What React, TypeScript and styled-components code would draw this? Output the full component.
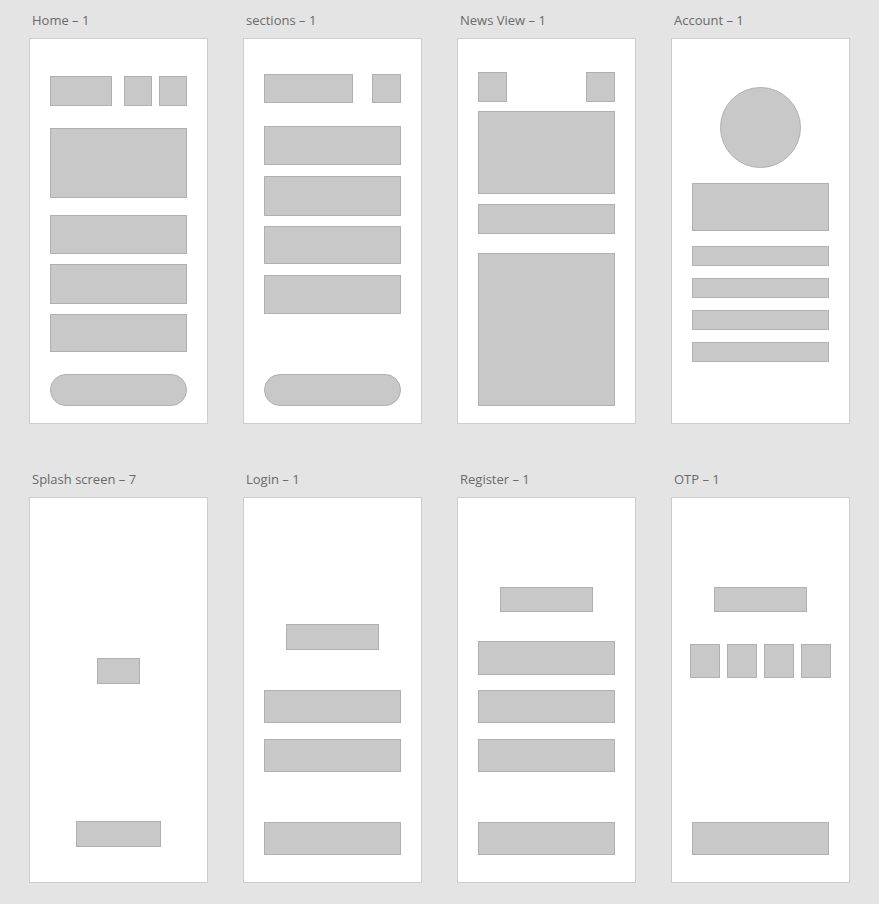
import React from "react";
import styled, { createGlobalStyle } from "styled-components";

const GlobalStyle = createGlobalStyle`
  *, *::before, *::after { box-sizing: border-box; }
  body {
    margin: 0;
    background: #e4e4e4;
    font-family: "Open Sans", "Noto Sans", sans-serif;
  }
`;

const Canvas = styled.main`
  display: grid;
  grid-template-columns: repeat(4, minmax(0, 1fr));
  gap: 45px 35px;
  padding: 10px 29px 21px;
`;

const Artboard = styled.section`
  display: flex;
  flex-direction: column;
`;

const Title = styled.h2`
  margin: 0 0 8px;
  padding-left: 3px;
  font-size: 13px;
  line-height: 20px;
  font-weight: 400;
  color: #6a6a6a;
  white-space: nowrap;
`;

const Screen = styled.div`
  display: flex;
  flex-direction: column;
  flex: 1;
  min-height: 386px;
  padding: 0 20px;
  background: #fff;
  border: 1px solid #cdcdcd;
`;

const Block = styled.div<{ $height: number; $top?: number }>`
  height: ${(p) => p.$height}px;
  margin-top: ${(p) => p.$top ?? 0}px;
  background: #c8c8c8;
  border: 1px solid #b0b0b0;
`;

const Pill = styled(Block)`
  border-radius: 16px;
`;

const CenteredBlock = styled(Block)<{ $width: number }>`
  width: ${(p) => p.$width}px;
  align-self: center;
`;

const Avatar = styled(CenteredBlock)`
  border-radius: 50%;
`;

const Toolbar = styled.div<{ $top: number; $columns: string; $gap?: number }>`
  display: grid;
  grid-template-columns: ${(p) => p.$columns};
  justify-content: space-between;
  column-gap: ${(p) => p.$gap ?? 0}px;
  margin-top: ${(p) => p.$top}px;
`;

const IconPair = styled.div`
  display: grid;
  grid-template-columns: 28px 28px;
  gap: 7px;
`;

const CodeFields = styled.div`
  display: grid;
  grid-template-columns: repeat(4, 1fr);
  gap: 7px;
  margin: 32px -2px 0;
`;

function Frame({ title, children }: { title: string; children: React.ReactNode }) {
  return (
    <Artboard aria-label={title}>
      <Title>{title}</Title>
      <Screen>{children}</Screen>
    </Artboard>
  );
}

export default function App() {
  return (
    <>
      <GlobalStyle />
      <Canvas>
        <Frame title="Home – 1">
          <Toolbar $top={37} $columns="1fr auto" $gap={12}>
            <Block $height={30} />
            <IconPair>
              <Block $height={30} />
              <Block $height={30} />
            </IconPair>
          </Toolbar>
          <Block $height={70} $top={22} />
          <Block $height={39} $top={17} />
          <Block $height={40} $top={10} />
          <Block $height={38} $top={10} />
          <Pill $height={32} $top={22} />
        </Frame>

        <Frame title="sections – 1">
          <Toolbar $top={35} $columns="1fr 29px" $gap={19}>
            <Block $height={29} />
            <Block $height={29} />
          </Toolbar>
          <Block $height={39} $top={23} />
          <Block $height={40} $top={11} />
          <Block $height={38} $top={10} />
          <Block $height={39} $top={11} />
          <Pill $height={32} $top={60} />
        </Frame>

        <Frame title="News View – 1">
          <Toolbar $top={33} $columns="29px 29px">
            <Block $height={30} />
            <Block $height={30} />
          </Toolbar>
          <Block $height={83} $top={9} />
          <Block $height={30} $top={10} />
          <Block $height={153} $top={19} />
        </Frame>

        <Frame title="Account – 1">
          <Avatar $width={81} $height={81} $top={48} />
          <Block $height={48} $top={15} />
          <Block $height={20} $top={15} />
          <Block $height={20} $top={12} />
          <Block $height={20} $top={12} />
          <Block $height={20} $top={12} />
        </Frame>

        <Frame title="Splash screen – 7">
          <CenteredBlock $width={43} $height={26} $top={160} />
          <CenteredBlock $width={85} $height={26} $top={137} />
        </Frame>

        <Frame title="Login – 1">
          <CenteredBlock $width={93} $height={26} $top={126} />
          <Block $height={33} $top={40} />
          <Block $height={33} $top={16} />
          <Block $height={33} $top={50} />
        </Frame>

        <Frame title="Register – 1">
          <CenteredBlock $width={93} $height={25} $top={89} />
          <Block $height={34} $top={29} />
          <Block $height={33} $top={15} />
          <Block $height={33} $top={16} />
          <Block $height={33} $top={50} />
        </Frame>

        <Frame title="OTP – 1">
          <CenteredBlock $width={93} $height={25} $top={89} />
          <CodeFields>
            <Block $height={34} />
            <Block $height={34} />
            <Block $height={34} />
            <Block $height={34} />
          </CodeFields>
          <Block $height={33} $top={144} />
        </Frame>
      </Canvas>
    </>
  );
}
